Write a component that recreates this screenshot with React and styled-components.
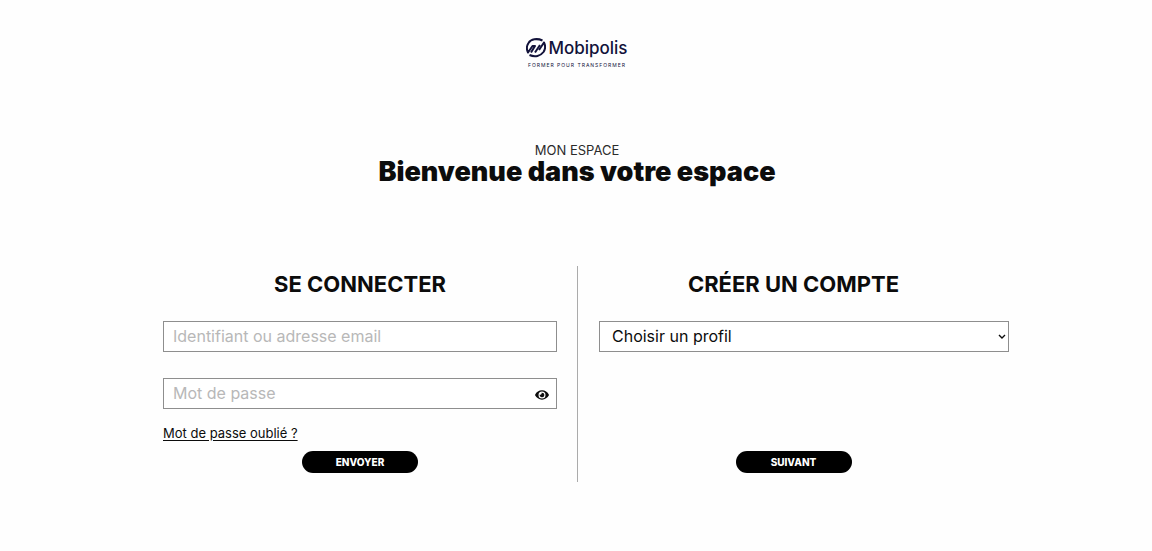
import React, { useState } from "react";
import styled, { createGlobalStyle } from "styled-components";
import { FaEye } from "react-icons/fa";

const GlobalStyle = createGlobalStyle`
  *, *::before, *::after { box-sizing: border-box; }
  body {
    margin: 0;
    background: #fefefe;
    color: #0c0c0c;
    font-family: Inter, "Open Sans", sans-serif;
  }
`;

const Page = styled.div`
  padding: 36px 143px 68px 145px;
`;

const Header = styled.header`
  display: flex;
  justify-content: center;
`;

const Brand = styled.a`
  display: flex;
  flex-direction: column;
  align-items: center;
  color: #12123a;
  text-decoration: none;
`;

const BrandRow = styled.span`
  display: flex;
  align-items: center;
  gap: 2px;
  height: 24px;
`;

const BrandName = styled.span`
  font-size: 17px;
  font-weight: 500;
  line-height: 24px;
`;

const Tagline = styled.span`
  margin-top: 1px;
  font-size: 5px;
  line-height: 8px;
  letter-spacing: 1px;
`;

const Welcome = styled.div`
  display: flex;
  flex-direction: column;
  align-items: center;
  margin-top: 73px;
`;

const Overline = styled.p`
  margin: 0;
  color: #2b2b2b;
  font-size: 13px;
  line-height: 16px;
`;

const Title = styled.h1`
  margin: 0;
  font-size: 27px;
  font-weight: 900;
  line-height: 28px;
`;

const Columns = styled.main`
  display: grid;
  grid-template-columns: 1fr 1fr;
  margin-top: 80px;
`;

const Panel = styled.form`
  display: flex;
  flex-direction: column;
  align-items: center;
  min-height: 216px;
  padding: ${(p) => (p.$divided ? "0 0 9px" : "0 20px 9px 18px")};
  border-left: ${(p) => (p.$divided ? "1px solid #ababab" : "0")};
`;

const PanelTitle = styled.h2`
  margin: 5px 0 24px;
  font-size: 22px;
  font-weight: 700;
  line-height: 26px;
`;

const Field = styled.div`
  position: relative;
  width: 100%;
  margin-bottom: 26px;
  padding-left: ${(p) => (p.$inset ? "21px" : "0")};
`;

const Input = styled.input`
  display: block;
  width: 100%;
  height: 31px;
  padding: 0 9px 2px;
  border: 1px solid #8e8e8e;
  border-radius: 0;
  background: #fff;
  color: #0c0c0c;
  font: 400 16px Inter, sans-serif;
  &::placeholder { color: #b8b8b8; }
`;

const Select = styled.select`
  appearance: none;
  display: block;
  width: 100%;
  height: 31px;
  padding: 0 20px 2px 12px;
  border: 1px solid #8e8e8e;
  border-radius: 0;
  background: #fff;
  color: #0c0c0c;
  font: 400 16px Inter, sans-serif;
`;

const SelectArrow = styled.svg`
  position: absolute;
  top: 13px;
  right: 3px;
  width: 8px;
  height: 6px;
  pointer-events: none;
`;

const RevealButton = styled.button`
  position: absolute;
  top: 10px;
  right: 8px;
  display: flex;
  padding: 0;
  border: 0;
  background: none;
  color: #0c0c0c;
  cursor: pointer;
`;

const ForgotLink = styled.a`
  align-self: flex-start;
  margin-top: -10px;
  color: #0c0c0c;
  font-size: 13px;
  line-height: 16px;
  text-underline-offset: 2px;
`;

const Submit = styled.button`
  width: 116px;
  height: 22px;
  margin-top: auto;
  padding: 0;
  border: 0;
  border-radius: 11px;
  background: #000;
  color: #fff;
  font: 800 10px Inter, sans-serif;
  cursor: pointer;
`;

function LogoMark() {
  return (
    <svg width="20" height="20" viewBox="0 0 40 40" fill="none" stroke="currentColor" strokeWidth="4" strokeLinejoin="round" aria-hidden="true">
      <path d="M33 5C22 0 10 2 5 10C1 16 1 23 4 29L13 16H18L10 29" />
      <path d="M7 34C18 39 29 36 35 28C39 22 39 15 36 9L26 24" />
      <path d="M18 29L28 14" />
    </svg>
  );
}

export default function App() {
  const [visible, setVisible] = useState(false);
  const stay = (event) => event.preventDefault();

  return (
    <>
      <GlobalStyle />
      <Page>
        <Header>
          <Brand href="#">
            <BrandRow>
              <LogoMark />
              <BrandName>Mobipolis</BrandName>
            </BrandRow>
            <Tagline>FORMER POUR TRANSFORMER</Tagline>
          </Brand>
        </Header>
        <Welcome>
          <Overline>MON ESPACE</Overline>
          <Title>Bienvenue dans votre espace</Title>
        </Welcome>
        <Columns>
          <Panel onSubmit={stay}>
            <PanelTitle>SE CONNECTER</PanelTitle>
            <Field>
              <Input type="text" aria-label="Identifiant ou adresse email" placeholder="Identifiant ou adresse email" />
            </Field>
            <Field>
              <Input type={visible ? "text" : "password"} aria-label="Mot de passe" placeholder="Mot de passe" />
              <RevealButton type="button" aria-label="Afficher le mot de passe" onClick={() => setVisible(!visible)}>
                <FaEye size={14} />
              </RevealButton>
            </Field>
            <ForgotLink href="#">Mot de passe oublié ?</ForgotLink>
            <Submit type="submit">ENVOYER</Submit>
          </Panel>
          <Panel $divided onSubmit={stay}>
            <PanelTitle>CRÉER UN COMPTE</PanelTitle>
            <Field $inset>
              <Select aria-label="Choisir un profil">
                <option>Choisir un profil</option>
              </Select>
              <SelectArrow viewBox="0 0 8 6" fill="none" stroke="#0c0c0c" strokeWidth="1.4" aria-hidden="true">
                <path d="M1 1L4 4L7 1" />
              </SelectArrow>
            </Field>
            <Submit type="submit">SUIVANT</Submit>
          </Panel>
        </Columns>
      </Page>
    </>
  );
}
